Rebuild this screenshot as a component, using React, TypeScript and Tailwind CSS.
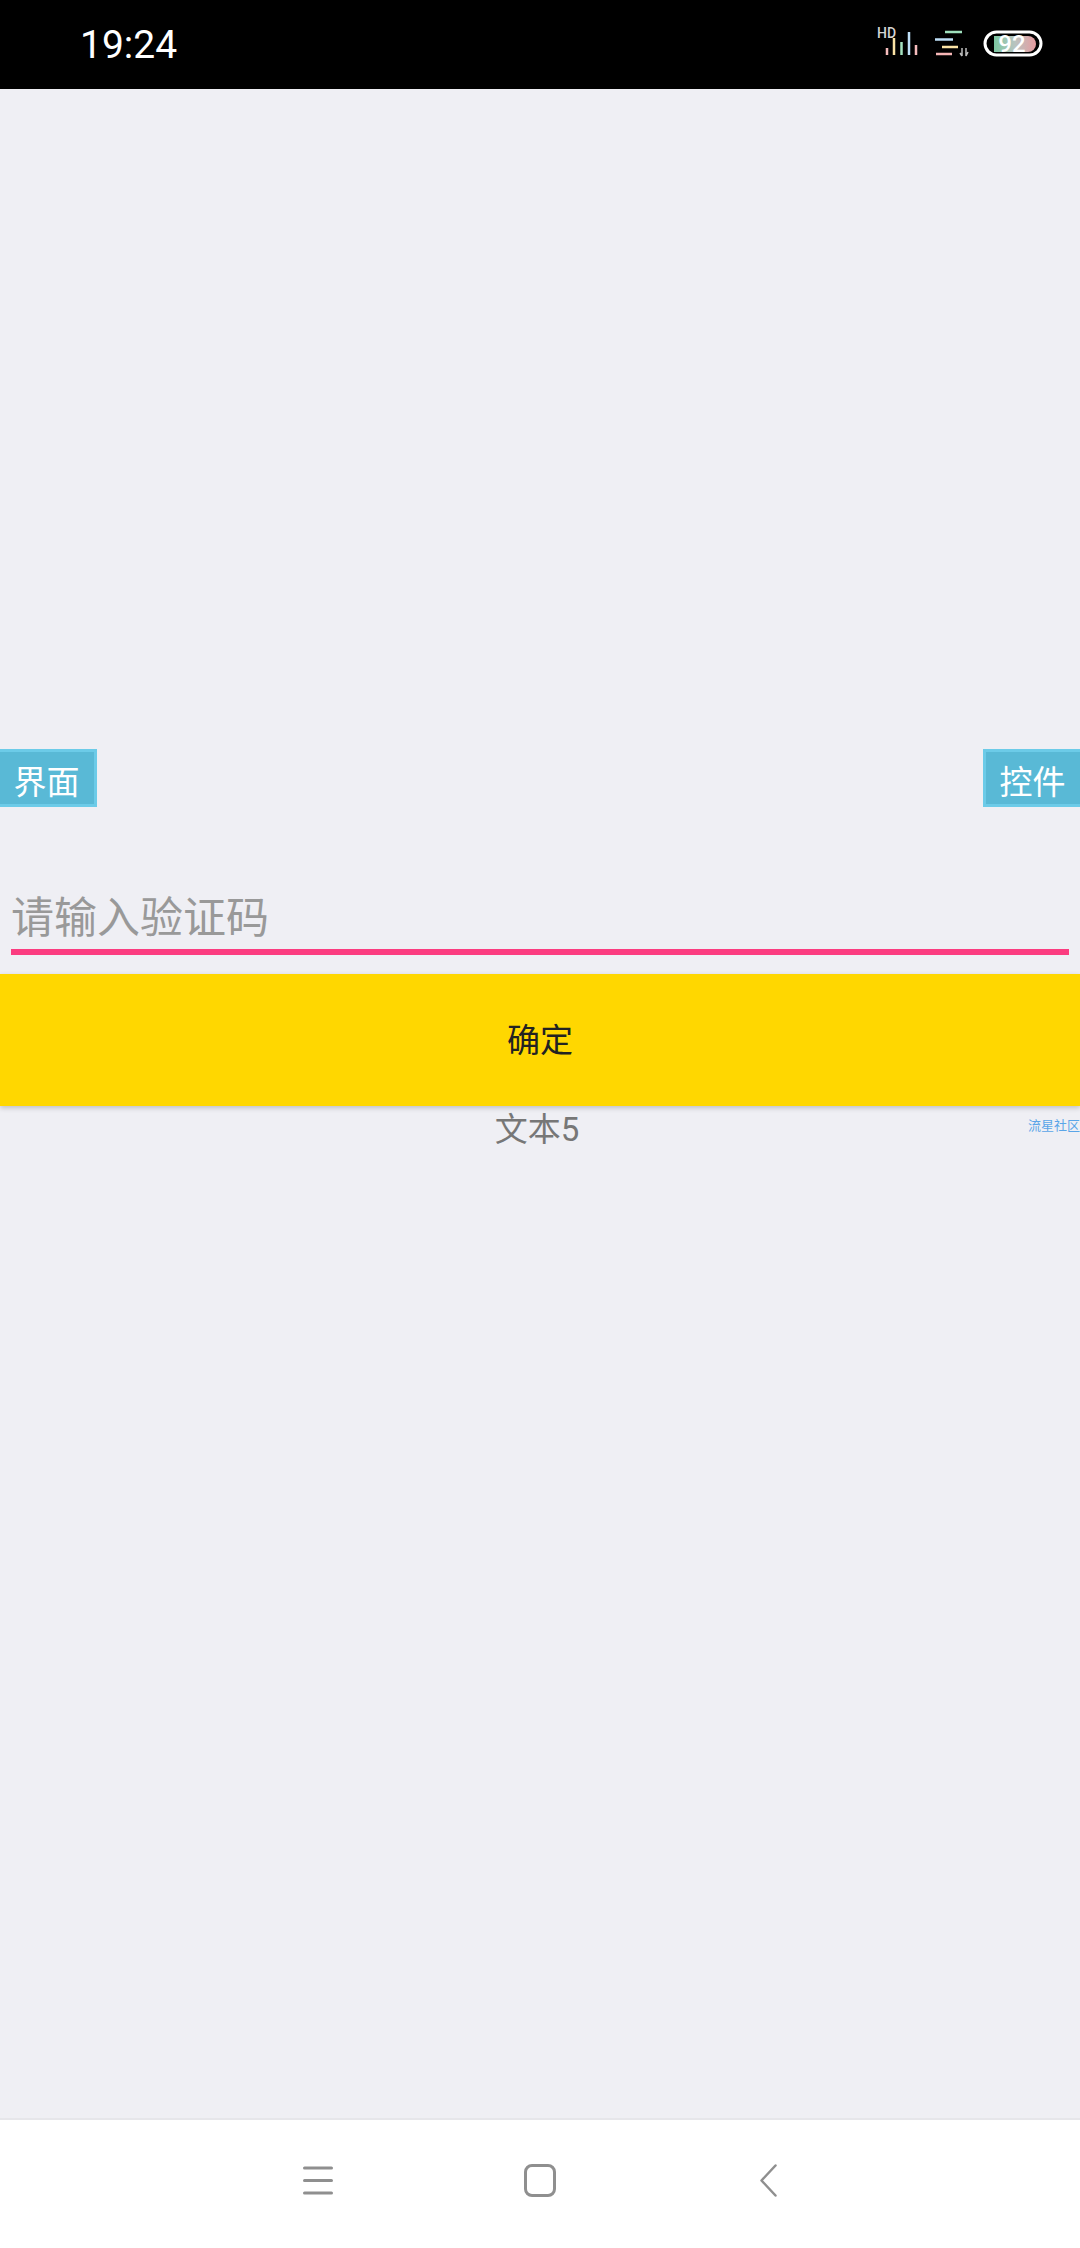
const font = "font-['Roboto','Noto_Sans_CJK_SC',sans-serif]";

const StatusIcons = () => (
  <svg width="180" height="45" viewBox="870 22 180 45" className="block">
    <defs>
      <linearGradient id="battery" x1="0" y1="0" x2="1" y2="0">
        <stop offset="0" stopColor="#7cc7a2" />
        <stop offset="0.5" stopColor="#b9c4c0" />
        <stop offset="1" stopColor="#e89b9f" />
      </linearGradient>
    </defs>
    <text x="877" y="38" fontSize="14" fontWeight="500" fill="#d4d4d4" fontFamily="Roboto, sans-serif">
      HD
    </text>
    <g strokeWidth="2.5" fill="none">
      <path d="M887 48V55" stroke="#f6bcbc" />
      <path d="M894 38V55" stroke="#fbe3a5" />
      <path d="M901.5 42V55" stroke="#a6e3c0" />
      <path d="M909 32V55" stroke="#bfe0f8" />
      <path d="M916 45V55" stroke="#f6bcbc" />
    </g>
    <g strokeWidth="2.5" fill="none">
      <path d="M945 32H962" stroke="#9fe0bd" />
      <path d="M935 39.5H953" stroke="#bfe0f8" />
      <path d="M942 47H958" stroke="#fbe3a5" />
      <path d="M936 54H952" stroke="#f6b6b6" />
    </g>
    <path d="M962 48V56M960 53L962 56M966 48V56L968 52" stroke="#bdbdbd" strokeWidth="1.5" fill="none" />
    <rect x="985" y="32" width="56" height="23" rx="11.5" fill="none" stroke="#ffffff" strokeWidth="3" />
    <path d="M994 36H1028a8 8 0 0 1 0 16H994Z" fill="url(#battery)" />
    <text x="1012" y="52" fontSize="24" fontWeight="500" fill="#ffffff" textAnchor="middle" fontFamily="Roboto, sans-serif">
      92
    </text>
  </svg>
);

const SideButton = ({ label, side }: { label: string; side: "left" | "right" }) => (
  <div
    className={`flex h-[58px] w-[97px] items-center justify-center border-[3px] border-[#6ccbe8] bg-[#59b9d6] pt-[9px] text-[33px] leading-none text-white ${
      side === "left" ? "border-l-0 pr-[1px]" : "border-r-0 pr-[1px]"
    }`}
  >
    {label}
  </div>
);

export default function App() {
  return (
    <div className={`flex h-[2248px] w-[1080px] flex-col overflow-hidden bg-[#efeff4] ${font}`}>
      <div className="flex h-[89px] items-center justify-between bg-black pl-[80px] pr-[30px]">
        <span className="pt-[2px] text-[39px] leading-none text-white">19:24</span>
        <StatusIcons />
      </div>

      <div className="flex-1 pt-[660px]">
        <div className="flex justify-between">
          <SideButton label="界面" side="left" />
          <SideButton label="控件" side="right" />
        </div>

        <div className="mx-[11px] mt-[84px] border-b-[6px] border-[#fb3c80] pb-[4px] text-[43px] leading-[54px] text-[#999999]">
          请输入验证码
        </div>

        <div className="mt-[19px] flex h-[132px] items-center justify-center bg-[#ffd700] text-[33px] leading-none text-[#222222] shadow-[0_2px_5px_rgba(0,0,0,0.2)]">
          确定
        </div>

        <div className="grid grid-cols-[1fr_auto_1fr] items-center pr-[6px] pt-[1px]">
          <div />
          <span className="text-[33px] leading-[46px] text-[#777777]">文本5</span>
          <span className="-mr-[6px] mb-[9px] justify-self-end text-[13px] leading-none text-[#5aa5e8]">流星社区</span>
        </div>
      </div>

      <div className="flex h-[130px] items-center justify-center border-t-2 border-[#e6e6ea] bg-white pb-[8px]">
        <div className="flex w-[474px] items-center justify-between">
          <svg width="30" height="29" viewBox="0 0 30 29" className="block">
            <path d="M1.5 2H28.5M1.5 14.5H28.5M1.5 27H28.5" stroke="#8f8f8f" strokeWidth="3" strokeLinecap="round" fill="none" />
          </svg>
          <svg width="32" height="33" viewBox="0 0 32 33" className="mr-[14px] block">
            <rect x="1.5" y="1.5" width="29" height="30" rx="6.5" stroke="#8f8f8f" strokeWidth="3" fill="none" />
          </svg>
          <svg width="17" height="33" viewBox="0 0 17 33" className="block">
            <path d="M15.5 1.5L1.5 16.5L15.5 31.5" stroke="#8f8f8f" strokeWidth="2.5" strokeLinecap="round" strokeLinejoin="round" fill="none" />
          </svg>
        </div>
      </div>
    </div>
  );
}
